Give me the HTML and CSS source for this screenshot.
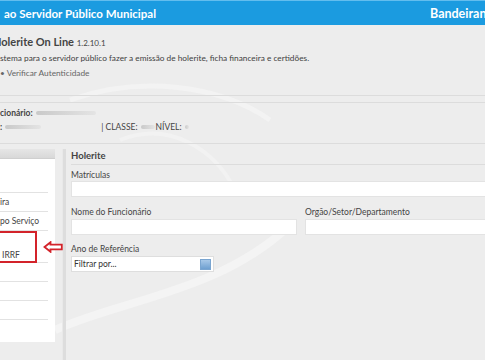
FILE: index.html
```html
<!DOCTYPE html>
<html lang="pt-BR">
<head>
    <meta charset="UTF-8">
    <title>Holerite On Line</title>
    <link rel="stylesheet" href="styles.css">
</head>
<body>
    <div class="page">
        <svg class="swirl" width="520" height="360" viewBox="0 0 520 360">
            <path d="M55 330 C 120 300, 220 292, 290 225" fill="none" stroke="#f4f4f4" stroke-width="8"/>
            <path d="M70 100 C 140 75, 220 85, 270 120" fill="none" stroke="#f3f3f3" stroke-width="5"/>
            <path d="M120 140 C 170 120, 215 150, 235 190" fill="none" stroke="#f2f2f2" stroke-width="4"/>
        </svg>

        <header class="topbar">
            <span class="site-title">ao Servidor Público Municipal</span>
            <span class="city">Bandeirantes</span>
        </header>

        <section class="intro">
            <h1>Holerite On Line <small>1.2.10.1</small></h1>
            <p>stema para o servidor público fazer a emissão de holerite, ficha financeira e certidões.</p>
            <p class="check">&bull; Verificar Autenticidade</p>
        </section>

        <section class="employee">
            <p><b>cionário:</b> <span class="blur w60"></span></p>
            <p class="row2"><b>:</b> <span class="blur w40"></span> <span class="classe">| CLASSE:<span class="blur w16"></span>NÍVEL:<span class="blur w4"></span></span></p>
        </section>

        <div class="main">
            <aside class="sidebar">
                <div class="side-head"></div>
                <ul>
                    <li class="tall"></li>
                    <li>ira</li>
                    <li>po Serviço</li>
                    <li class="tall marked">IRRF</li>
                    <li></li>
                    <li></li>
                    <li></li>
                </ul>
                <svg class="arrow" width="20" height="12" viewBox="0 0 20 12">
                    <path d="M1.5 6 L7.5 1.2 L7.5 3.6 L18.8 3.6 L18.8 8.4 L7.5 8.4 L7.5 10.8 Z" fill="#fff" stroke="#d3232a" stroke-width="1.8"/>
                </svg>
            </aside>

            <div class="divider"></div>

            <div class="content">
                <h2>Holerite</h2>
                <label>Matrículas</label>
                <div class="field"></div>
                <div class="pair">
                    <div class="col">
                        <label>Nome do Funcionário</label>
                        <div class="field"></div>
                    </div>
                    <div class="col">
                        <label>Orgão/Setor/Departamento</label>
                        <div class="field"></div>
                    </div>
                </div>
                <label class="year">Ano de Referência</label>
                <div class="select">
                    <span>Filtrar por...</span>
                    <span class="drop"></span>
                </div>
            </div>
        </div>
    </div>
</body>
</html>
```

FILE: styles.css
```css
html, body {
    margin: 0;
    padding: 0;
    overflow: hidden;
}

body {
    background-color: #ededed;
    font-family: Lato, "Open Sans", Arial, sans-serif;
    color: #444;
    height: 360px;
}

.page {
    position: relative;
    width: 520px;
    height: 360px;
}

.swirl {
    position: absolute;
    left: 0;
    top: 0;
}

.topbar {
    position: relative;
    display: flex;
    align-items: center;
    height: 24px;
    background-color: #1b9be0;
    border-top: 1px solid #63bdee;
    color: white;
    font-weight: bold;
    font-size: 11.5px;
    padding-left: 4px;
}

.city {
    margin-left: auto;
    width: 90px;
    font-size: 12.5px;
}

.intro {
    position: relative;
    padding: 10px 0 0 0;
    height: 60px;
    border-bottom: 1px solid #dcdcdc;
}

.intro h1 {
    margin: 0 0 0 -7px;
    font-size: 11px;
    font-weight: bold;
    color: #444;
    line-height: 14px;
}

.intro h1 small {
    font-size: 8px;
    font-weight: normal;
}

.intro p {
    margin: 2px 0 0 0;
    font-size: 8.3px;
    line-height: 12px;
    color: #3f3f3f;
}

.intro .check {
    margin-top: 3px;
    color: #666;
}

.employee {
    position: relative;
    border-top: 1px solid #dcdcdc;
    border-bottom: 1px solid #dcdcdc;
    margin-top: 6px;
    padding: 3px 0 0 0;
    height: 37px;
    font-size: 8.5px;
    color: #444;
}

.employee p {
    margin: 0;
    line-height: 14px;
    display: flex;
    align-items: center;
}

.blur {
    display: inline-block;
    height: 4px;
    background: linear-gradient(90deg, #c9c9c9, #e4e4e4);
    border-radius: 2px;
    margin-left: 3px;
}

.w60 { width: 60px; }
.w40 { width: 36px; }
.w16 { width: 14px; margin-right: 1px; }
.w4 { width: 4px; }

.classe {
    margin-left: 60px;
    display: inline-flex;
    align-items: center;
}

.main {
    position: relative;
    display: flex;
    margin-top: 5px;
}

.sidebar {
    position: relative;
    width: 55px;
    background-color: white;
    height: 193px;
}

.side-head {
    height: 9px;
    background: linear-gradient(#e6e6e6, #d8d8d8);
    border-bottom: 1px solid #cfcfcf;
}

.sidebar ul {
    list-style: none;
    margin: 0;
    padding: 0;
}

.sidebar li {
    height: 18px;
    border-bottom: 1px solid #e2e2e2;
    font-size: 8.5px;
    color: #444;
    display: flex;
    align-items: center;
    margin-right: 7px;
}

.sidebar li.tall {
    height: 33px;
}

.sidebar li.tall.marked {
    height: 31px;
    padding-left: 2px;
    align-items: flex-end;
    line-height: 13px;
}

.marked::after {
    content: "";
    position: absolute;
    left: -2px;
    top: 82px;
    width: 35px;
    height: 28px;
    border: 2px solid #d3232a;
}

.arrow {
    position: absolute;
    left: 43px;
    top: 92px;
}

.divider {
    width: 3px;
    margin-left: 7px;
    background-color: #dddddd;
    border-left: 1px solid #e9e9e9;
    height: 220px;
}

.content {
    flex: 1;
    padding-left: 5px;
    position: relative;
}

.content h2 {
    margin: 0;
    font-size: 9.5px;
    font-weight: bold;
    color: #444;
    line-height: 14px;
    padding-bottom: 1px;
    border-bottom: 1px solid #dcdcdc;
}

.content label {
    display: block;
    font-size: 8.5px;
    color: #444;
    line-height: 12px;
    margin-top: 4px;
}

.field {
    height: 14px;
    background: white;
    border: 1px solid #e3e3e3;
}

.pair {
    display: flex;
    gap: 8px;
}

.pair label {
    margin-top: 9px;
}

.pair .field {
    margin-top: 1px;
}

.pair .col:first-child {
    width: 226px;
}

.pair .col:last-child {
    flex: 1;
}

.content .year {
    margin-top: 8px;
}

.select {
    width: 139px;
    height: 14px;
    background: white;
    border: 1px solid #dedede;
    margin-top: 1px;
    display: flex;
    align-items: center;
    justify-content: space-between;
    font-size: 8.5px;
    color: #333;
    padding-left: 2px;
}

.drop {
    width: 11px;
    height: 11px;
    margin-right: 2px;
    background: linear-gradient(#a7c8e8, #6e9fd0);
    border: 1px solid #7aa5d0;
    box-sizing: border-box;
}
```
